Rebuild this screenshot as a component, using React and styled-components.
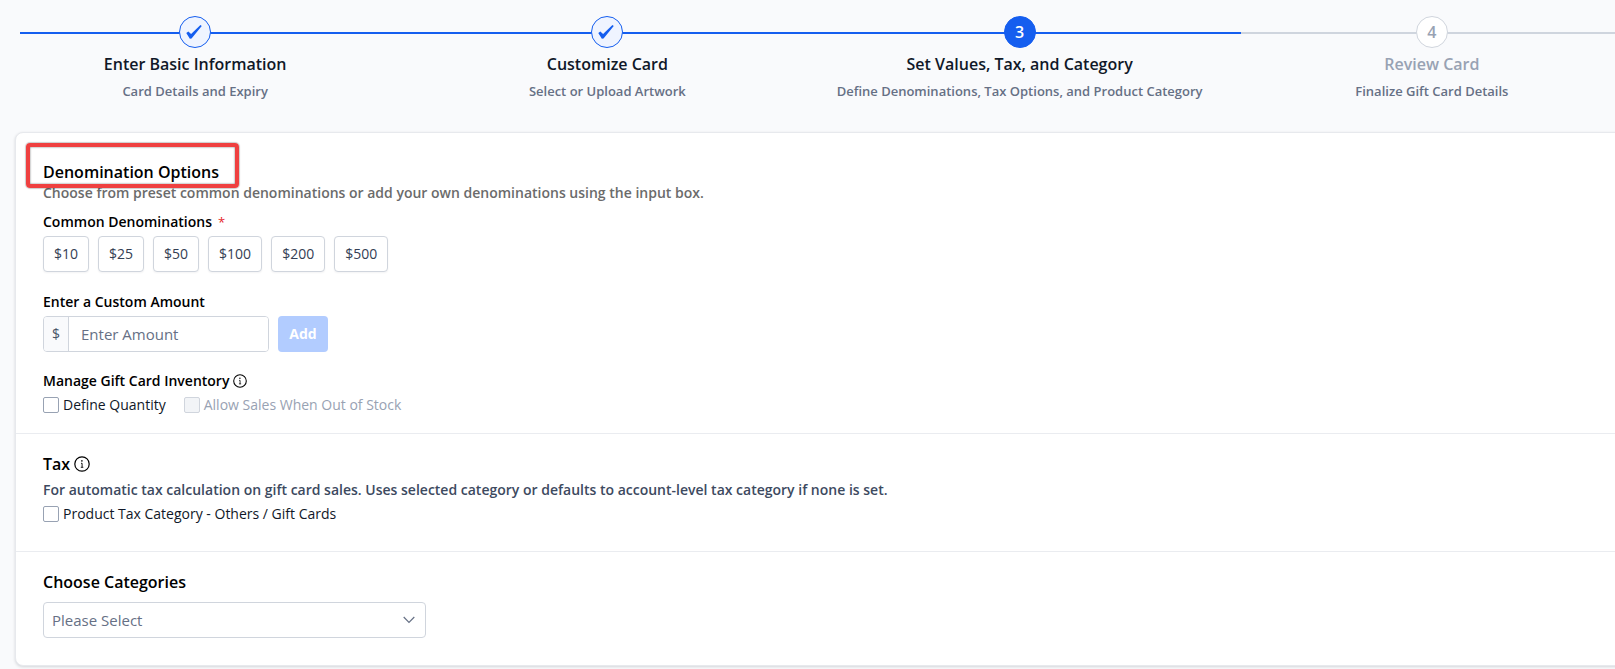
import React, { useState } from "react";
import styled, { createGlobalStyle, css } from "styled-components";

const GlobalStyle = createGlobalStyle`
  *, *::before, *::after { box-sizing: border-box; }
  body {
    margin: 0;
    background: #f9fafc;
    color: #000;
    font-family: "Open Sans", "Noto Sans", sans-serif;
    font-size: 14px;
    line-height: 20px;
  }
  button, input, select { font: inherit; }
`;

const Page = styled.div`
  overflow-x: clip;
  padding: 16px 0 3px 15px;
`;

const Stepper = styled.nav`
  position: relative;
  height: 116px;
`;

const Track = styled.div`
  position: absolute;
  top: 16px;
  left: 5px;
  right: -33px;
  height: 2px;
  background: #cfd5de;
`;

const Progress = styled.div`
  width: 75%;
  height: 100%;
  background: #155eef;
`;

const Steps = styled.ol`
  position: relative;
  display: grid;
  grid-template-columns: repeat(4, 1fr);
  margin: 0 -23px 0 -26px;
  padding: 0;
  list-style: none;
`;

const Step = styled.li`
  display: flex;
  flex-direction: column;
  align-items: center;
`;

const stepLooks = {
  done: css`
    background: #eff4ff;
    border-color: #155eef;
    color: #155eef;
  `,
  current: css`
    background: #155eef;
    border-color: #155eef;
    color: #fff;
  `,
  upcoming: css`
    background: #fff;
    border-color: #d0d5dd;
    color: #98a2b3;
  `,
};

const StepCircle = styled.span`
  display: flex;
  align-items: center;
  justify-content: center;
  width: 32px;
  height: 32px;
  border: 1px solid;
  border-radius: 50%;
  font-size: 16px;
  font-weight: 600;
  ${(p) => stepLooks[p.$state]}
`;

const StepTitle = styled.span`
  margin-top: 5px;
  font-size: 16px;
  line-height: 22px;
  font-weight: 600;
  color: ${(p) => (p.$state === "upcoming" ? "#98a2b3" : "#101828")};
`;

const StepNote = styled.span`
  margin-top: 6px;
  font-size: 13px;
  font-weight: 600;
  color: #667085;
`;

const Card = styled.main`
  margin-right: -16px;
  background: #fff;
  border: 1px solid #e7e9ed;
  border-radius: 8px;
  box-shadow: 0 1px 3px rgba(16, 24, 40, 0.16);
`;

const Section = styled.section`
  padding: 19px 27px ${(p) => p.$bottom}px;

  &:first-child { padding-top: 28px; }
  & + & { border-top: 1px solid #eaecf0; }
`;

const Heading = styled.h2`
  display: flex;
  align-items: center;
  gap: 4px;
  width: fit-content;
  margin: 0;
  font-size: 16px;
  line-height: 22px;
  font-weight: 600;
`;

const MarkedHeading = styled(Heading)`
  position: relative;

  &::after {
    content: "";
    position: absolute;
    inset: -18px -20px -5px -17px;
    border: 4px solid #ef4040;
    border-radius: 4px;
    box-shadow: 0 0 1px 1px rgba(0, 0, 0, 0.2), inset 0 0 2px rgba(0, 0, 0, 0.6);
  }
`;

const Description = styled.p`
  margin: ${(p) => (p.$spaced ? 5 : 0)}px 0 0;
  font-weight: 600;
  color: ${(p) => (p.$muted ? "#6b6b6b" : "#3d4a5f")};
`;

const Group = styled.fieldset`
  margin: ${(p) => p.$top}px 0 0;
  padding: 0;
  border: 0;
  min-width: 0;
`;

const groupTitle = css`
  display: flex;
  align-items: center;
  gap: 4px;
  padding: 0;
  font-weight: 600;
`;

const Legend = styled.legend`${groupTitle}`;
const FieldLabel = styled.label`${groupTitle}`;

const Required = styled.span`
  margin-left: 2px;
  color: #e5252a;
  font-size: 13px;
  font-weight: 400;
`;

const Row = styled.div`
  display: flex;
  align-items: center;
  gap: ${(p) => p.$gap || 9}px;
  margin-top: 4px;
`;

const AmountButton = styled.button`
  height: 36px;
  padding: 0 10px;
  background: #fff;
  border: 1px solid #d0d5dd;
  border-radius: 4px;
  box-shadow: 0 1px 2px rgba(16, 24, 40, 0.05);
  color: #344054;
  font-weight: 500;
`;

const AmountField = styled.div`
  display: flex;
  width: 226px;
  height: 36px;
  border: 1px solid #d0d5dd;
  border-radius: 4px;
  overflow: hidden;
`;

const Currency = styled.span`
  display: flex;
  align-items: center;
  justify-content: center;
  width: 25px;
  background: #f9fafc;
  border-right: 1px solid #d0d5dd;
  color: #475467;
`;

const AmountInput = styled.input`
  flex: 1;
  min-width: 0;
  padding: 0 12px;
  border: 0;
  outline: 0;
  font-size: 15px;
  color: #344054;

  &::placeholder { color: #667085; opacity: 1; }
`;

const AddButton = styled.button`
  width: 50px;
  height: 36px;
  padding: 0;
  background: #b2ccff;
  border: 0;
  border-radius: 4px;
  color: #fff;
  font-weight: 700;
`;

const CheckLabel = styled.label`
  display: flex;
  align-items: center;
  gap: 4px;
  color: ${(p) => (p.$off ? "#98a2b3" : "#101828")};
`;

const Checkbox = styled.input`
  appearance: none;
  width: 16px;
  height: 16px;
  margin: 0;
  background: #fff;
  border: 1px solid #98a2b3;
  border-radius: 2px;

  &:checked { background: #155eef; border-color: #155eef; }
  &:disabled { background: #f2f4f7; border-color: #d0d5dd; }
`;

const SelectBox = styled.div`
  position: relative;
  width: 383px;
  max-width: 100%;
  margin-top: 9px;
`;

const Select = styled.select`
  appearance: none;
  display: block;
  width: 100%;
  height: 36px;
  padding: 0 32px 0 8px;
  background: #fff;
  border: 1px solid #d0d5dd;
  border-radius: 4px;
  color: #667085;
  font-size: 15px;
`;

const Chevron = styled.svg`
  position: absolute;
  top: 14px;
  right: 11px;
  pointer-events: none;
`;

function CheckIcon() {
  return (
    <svg width="32" height="32" viewBox="0 0 32 32" fill="currentColor" aria-hidden="true">
      <path d="M6.7 17 8.9 15.4 11.8 18 21.8 8.6 23.2 9.6 12.3 22.9 10.5 23.1Z" />
    </svg>
  );
}

function InfoIcon({ size }) {
  return (
    <svg width={size} height={size} viewBox="0 0 16 16" fill="none" stroke="#000" aria-hidden="true">
      <circle cx="8" cy="8" r="7.2" strokeWidth="1.2" />
      <circle cx="7.9" cy="4.9" r="0.8" fill="#000" stroke="none" />
      <path d="M7 7.3H8.1V11.2M6.8 11.3H9.3" strokeWidth="0.9" />
    </svg>
  );
}

const steps = [
  { title: "Enter Basic Information", note: "Card Details and Expiry", state: "done" },
  { title: "Customize Card", note: "Select or Upload Artwork", state: "done" },
  { title: "Set Values, Tax, and Category", note: "Define Denominations, Tax Options, and Product Category", state: "current" },
  { title: "Review Card", note: "Finalize Gift Card Details", state: "upcoming" },
];

const amounts = [10, 25, 50, 100, 200, 500];

export default function App() {
  const [custom, setCustom] = useState("");
  return (
    <Page>
      <GlobalStyle />
      <Stepper aria-label="Progress">
        <Track><Progress /></Track>
        <Steps>
          {steps.map((s, i) => (
            <Step key={s.title} aria-current={s.state === "current" ? "step" : undefined}>
              <StepCircle $state={s.state}>{s.state === "done" ? <CheckIcon /> : i + 1}</StepCircle>
              <StepTitle $state={s.state}>{s.title}</StepTitle>
              <StepNote>{s.note}</StepNote>
            </Step>
          ))}
        </Steps>
      </Stepper>

      <Card>
        <Section $bottom={18}>
          <MarkedHeading>Denomination Options</MarkedHeading>
          <Description $muted>
            Choose from preset common denominations or add your own denominations using the input box.
          </Description>
          <Group $top={9}>
            <Legend>Common Denominations <Required>*</Required></Legend>
            <Row>
              {amounts.map((a) => (
                <AmountButton key={a} type="button">${a}</AmountButton>
              ))}
            </Row>
          </Group>
          <Group as="div" $top={20}>
            <FieldLabel htmlFor="amount">Enter a Custom Amount</FieldLabel>
            <Row>
              <AmountField>
                <Currency>$</Currency>
                <AmountInput
                  id="amount"
                  type="text"
                  placeholder="Enter Amount"
                  value={custom}
                  onChange={(e) => setCustom(e.target.value)}
                />
              </AmountField>
              <AddButton type="button">Add</AddButton>
            </Row>
          </Group>
          <Group $top={19}>
            <Legend>Manage Gift Card Inventory <InfoIcon size={14} /></Legend>
            <Row $gap={18}>
              <CheckLabel><Checkbox type="checkbox" />Define Quantity</CheckLabel>
              <CheckLabel $off><Checkbox type="checkbox" disabled />Allow Sales When Out of Stock</CheckLabel>
            </Row>
          </Group>
        </Section>

        <Section $bottom={27}>
          <Heading>Tax <InfoIcon size={16} /></Heading>
          <Description $spaced>
            For automatic tax calculation on gift card sales. Uses selected category or defaults to account-level tax category if none is set.
          </Description>
          <Row>
            <CheckLabel><Checkbox type="checkbox" />Product Tax Category - Others / Gift Cards</CheckLabel>
          </Row>
        </Section>

        <Section $bottom={27}>
          <Heading as="label" htmlFor="category">Choose Categories</Heading>
          <SelectBox>
            <Select id="category" defaultValue="">
              <option value="">Please Select</option>
            </Select>
            <Chevron width="12" height="8" viewBox="0 0 12 8" fill="none" stroke="#667085" aria-hidden="true">
              <path d="M.7 1 6 6.3 11.3 1" strokeWidth="1.2" />
            </Chevron>
          </SelectBox>
        </Section>
      </Card>
    </Page>
  );
}
